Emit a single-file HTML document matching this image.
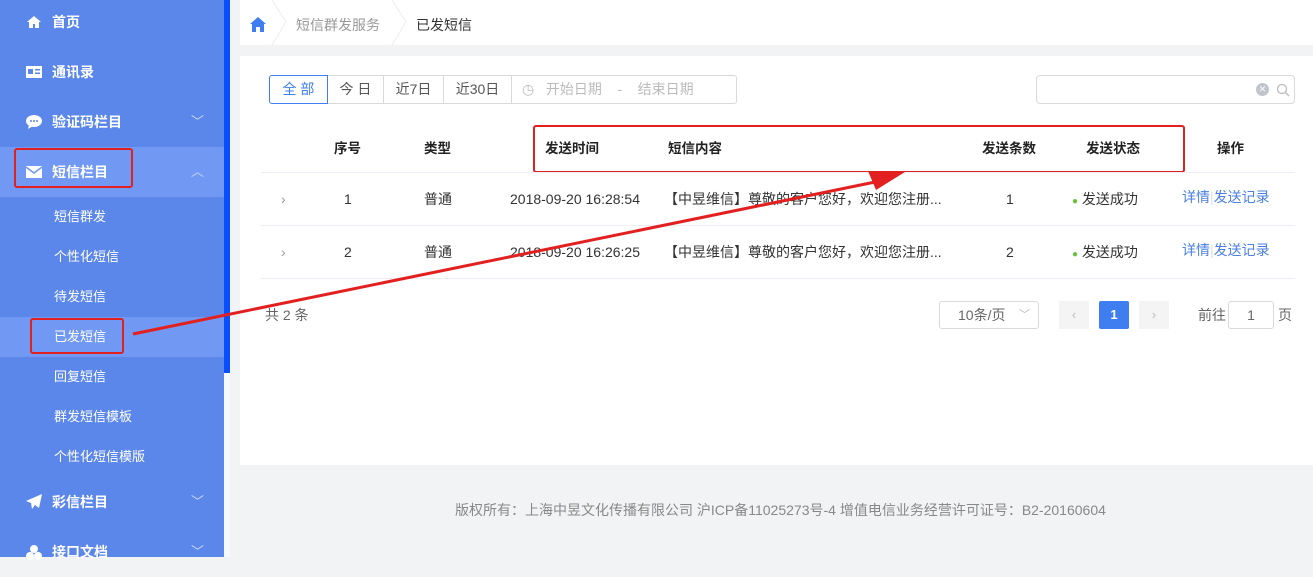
<!DOCTYPE html>
<html><head><meta charset="utf-8"><style>
*{margin:0;padding:0;box-sizing:border-box}
body{width:1313px;height:557px;overflow:hidden;background:#f2f3f5;font-family:"Liberation Sans","Noto Sans CJK SC",sans-serif;font-size:13px;color:#333;position:relative}
.sb{position:absolute;left:0;top:0;width:224px;height:557px;background:#5c87ea;color:#fff}
.sbbar{position:absolute;left:224px;top:0;width:6px;height:373px;background:#0a4dff}
.sbbar2{position:absolute;left:224px;top:373px;width:6px;height:184px;background:#f7f8fa}
.it{position:absolute;left:0;width:224px;height:50px;line-height:50px;font-size:14px;font-weight:bold;padding-left:52px}
.ic{position:absolute;left:26px;top:17px;width:16px;height:16px}
.ch{position:absolute;right:20px;top:0;font-weight:normal;color:#c8d6fa;font-size:13px}
.sub{position:absolute;left:54px;font-size:13px;height:40px;line-height:40px}
.act{background:#7198f2}
.top{position:absolute;left:240px;top:0;width:1073px;height:45px;background:#fff}
.card{position:absolute;left:240px;top:56px;width:1073px;height:409px;background:#fff}
.abs{position:absolute}
.btn{position:absolute;top:75px;height:29px;border:1px solid #d9d9d9;line-height:27px;text-align:center;color:#555;font-size:14px}
.th,.td{position:absolute;height:20px;line-height:20px;white-space:nowrap;font-size:14px}
.th{top:139px;font-weight:bold;color:#222;font-size:13.5px}
.td{color:#333}
.hr{position:absolute;left:261px;width:1034px;height:1px;background:#ebeef5}
.lnk{color:#4a7fe0}
.r1{top:189px}.r2{top:242px}
</style></head><body>
<div class="sb">
 <div class="it" style="top:-3px"><svg class="ic" viewBox="0 0 16 16"><path d="M8 2L1 8h2v6h4v-4h2v4h4V8h2z" fill="#fff"/></svg>首页</div>
 <div class="it" style="top:47px"><svg class="ic" viewBox="0 0 16 16"><rect x="0" y="2" width="16" height="12" fill="#fff"/><rect x="2" y="5" width="5" height="5" fill="#5c87ea"/><rect x="9" y="5" width="5" height="1.5" fill="#5c87ea"/><rect x="9" y="8.5" width="5" height="1.5" fill="#5c87ea"/></svg>通讯录</div>
 <div class="it" style="top:97px"><svg class="ic" viewBox="0 0 16 16"><ellipse cx="8" cy="7" rx="8" ry="6" fill="#fff"/><path d="M3 11l-1 4 5-3z" fill="#fff"/><circle cx="5" cy="7" r="1" fill="#5c87ea"/><circle cx="8" cy="7" r="1" fill="#5c87ea"/><circle cx="11" cy="7" r="1" fill="#5c87ea"/></svg>验证码栏目<span class="ch">﹀</span></div>
 <div class="it act" style="top:147px"><svg class="ic" viewBox="0 0 16 16"><rect x="0" y="2" width="16" height="12" fill="#fff"/><path d="M0 3l8 6 8-6" stroke="#7198f2" stroke-width="1.5" fill="none"/></svg>短信栏目<span class="ch">︿</span></div>
 <div class="abs" style="left:14px;top:148px;width:119px;height:40px;border:2.5px solid #e32020;border-radius:3px"></div>
 <div class="sub" style="top:197px">短信群发</div>
 <div class="sub" style="top:237px">个性化短信</div>
 <div class="sub" style="top:277px">待发短信</div>
 <div class="abs act" style="left:0;top:317px;width:224px;height:40px"></div>
 <div class="sub" style="top:317px">已发短信</div>
 <div class="abs" style="left:30px;top:318px;width:94px;height:36px;border:2.5px solid #e32020;border-radius:3px"></div>
 <div class="sub" style="top:357px">回复短信</div>
 <div class="sub" style="top:397px">群发短信模板</div>
 <div class="sub" style="top:437px">个性化短信模版</div>
 <div class="it" style="top:477px"><svg class="ic" viewBox="0 0 16 16"><path d="M16 0L0 7l5 2 1 6 3-4 4 3z" fill="#fff"/></svg>彩信栏目<span class="ch">﹀</span></div>
 <div class="it" style="top:527px"><svg class="ic" viewBox="0 0 16 16"><circle cx="8" cy="5" r="4" fill="#fff"/><circle cx="4" cy="12" r="4" fill="#fff"/><circle cx="12" cy="12" r="4" fill="#fff"/></svg>接口文档<span class="ch">﹀</span></div>
</div>
<div class="sbbar"></div><div class="sbbar2"></div>
<div class="top">
 <svg class="abs" style="left:10px;top:17px" width="16" height="15" viewBox="0 0 16 15"><path d="M8 0L0 7h2v8h4v-5h4v5h4V7h2z" fill="#3f7ef0"/></svg>
 <svg class="abs" style="left:30px;top:0" width="20" height="45"><path d="M2 0L16 22L2 45" stroke="#eee" fill="none"/></svg>
 <div class="abs" style="left:56px;top:15px;color:#999;font-size:14px;line-height:20px">短信群发服务</div>
 <svg class="abs" style="left:150px;top:0" width="20" height="45"><path d="M2 0L16 22L2 45" stroke="#eee" fill="none"/></svg>
 <div class="abs" style="left:176px;top:15px;color:#333;font-size:14px;line-height:20px">已发短信</div>
</div>
<div class="card"></div>
<div class="btn" style="left:269px;width:59px;border-color:#3f7ef0;color:#3f7ef0;border-radius:3px 0 0 3px;z-index:2">全 部</div>
<div class="btn" style="left:327px;width:57px">今 日</div>
<div class="btn" style="left:383px;width:61px">近7日</div>
<div class="btn" style="left:443px;width:69px">近30日</div>
<div class="btn" style="left:511px;width:226px;text-align:left;padding-left:10px;color:#bbb;border-radius:0 3px 3px 0">◷ &nbsp; 开始日期 &nbsp;&nbsp; - &nbsp;&nbsp; 结束日期</div>
<div class="btn" style="left:1036px;width:259px;border-radius:4px"><span class="abs" style="right:25px;top:7px;width:13px;height:13px;border-radius:50%;background:#c0c4cc;color:#fff;font-size:9px;line-height:13px">✕</span><svg class="abs" style="right:4px;top:7px" width="14" height="14"><circle cx="6" cy="6" r="4.5" stroke="#bbb" fill="none" stroke-width="1.3"/><path d="M9.5 9.5L13 13" stroke="#bbb" stroke-width="1.3"/></svg></div>
<div class="th" style="left:334px">序号</div>
<div class="th" style="left:424px">类型</div>
<div class="th" style="left:545px">发送时间</div>
<div class="th" style="left:668px">短信内容</div>
<div class="th" style="left:982px">发送条数</div>
<div class="th" style="left:1086px">发送状态</div>
<div class="th" style="left:1217px">操作</div>
<div class="abs" style="left:533px;top:125px;width:652px;height:48px;border:2.5px solid #e32020;border-radius:3px"></div>
<div class="hr" style="top:172px"></div>
<div class="hr" style="top:225px"></div>
<div class="hr" style="top:278px"></div>
<div class="td r1" style="left:281px;color:#999">›</div>
<div class="td r1" style="left:344px">1</div>
<div class="td r1" style="left:424px">普通</div>
<div class="td r1" style="left:510px">2018-09-20 16:28:54</div>
<div class="td r1" style="left:664px">【中昱维信】尊敬的客户您好，欢迎您注册...</div>
<div class="td r1" style="left:1006px">1</div>
<div class="td r1" style="left:1072px"><span style="color:#67c23a;font-size:10px">●</span> 发送成功</div>
<div class="td lnk" style="left:1182px;top:187px">详情<span style="color:#ddd">|</span>发送记录</div>
<div class="td r2" style="left:281px;color:#999">›</div>
<div class="td r2" style="left:344px">2</div>
<div class="td r2" style="left:424px">普通</div>
<div class="td r2" style="left:510px">2018-09-20 16:26:25</div>
<div class="td r2" style="left:664px">【中昱维信】尊敬的客户您好，欢迎您注册...</div>
<div class="td r2" style="left:1006px">2</div>
<div class="td r2" style="left:1072px"><span style="color:#67c23a;font-size:10px">●</span> 发送成功</div>
<div class="td lnk" style="left:1182px;top:240px">详情<span style="color:#ddd">|</span>发送记录</div>
<div class="td" style="left:265px;top:305px;color:#666">共 2 条</div>
<div class="btn" style="left:939px;top:301px;width:100px;height:28px;color:#666;border-radius:3px;text-align:left;padding-left:18px">10条/页 <span class="abs" style="right:8px;top:0;color:#bbb;font-size:11px">﹀</span></div>
<div class="abs" style="left:1059px;top:301px;width:30px;height:28px;background:#f4f4f5;color:#bbb;text-align:center;line-height:28px">‹</div>
<div class="abs" style="left:1099px;top:301px;width:30px;height:28px;background:#3f7ef0;color:#fff;text-align:center;line-height:28px;font-weight:bold;border-radius:2px">1</div>
<div class="abs" style="left:1139px;top:301px;width:30px;height:28px;background:#f4f4f5;color:#bbb;text-align:center;line-height:28px">›</div>
<div class="td" style="left:1198px;top:305px;color:#666">前往</div>
<div class="btn" style="left:1228px;top:301px;width:46px;height:28px;color:#666;border-radius:3px">1</div>
<div class="td" style="left:1278px;top:305px;color:#666">页</div>
<div class="abs" style="left:455px;top:500px;white-space:nowrap;color:#888;font-size:14px;line-height:20px">版权所有：上海中昱文化传播有限公司 沪ICP备11025273号-4 增值电信业务经营许可证号：B2-20160604</div>
<svg class="abs" style="left:0;top:0" width="1313" height="557"><line x1="133" y1="334" x2="880" y2="181" stroke="#e32020" stroke-width="3"/><path d="M905 172L868 171L876 190Z" fill="#e32020"/></svg>
</body></html>
